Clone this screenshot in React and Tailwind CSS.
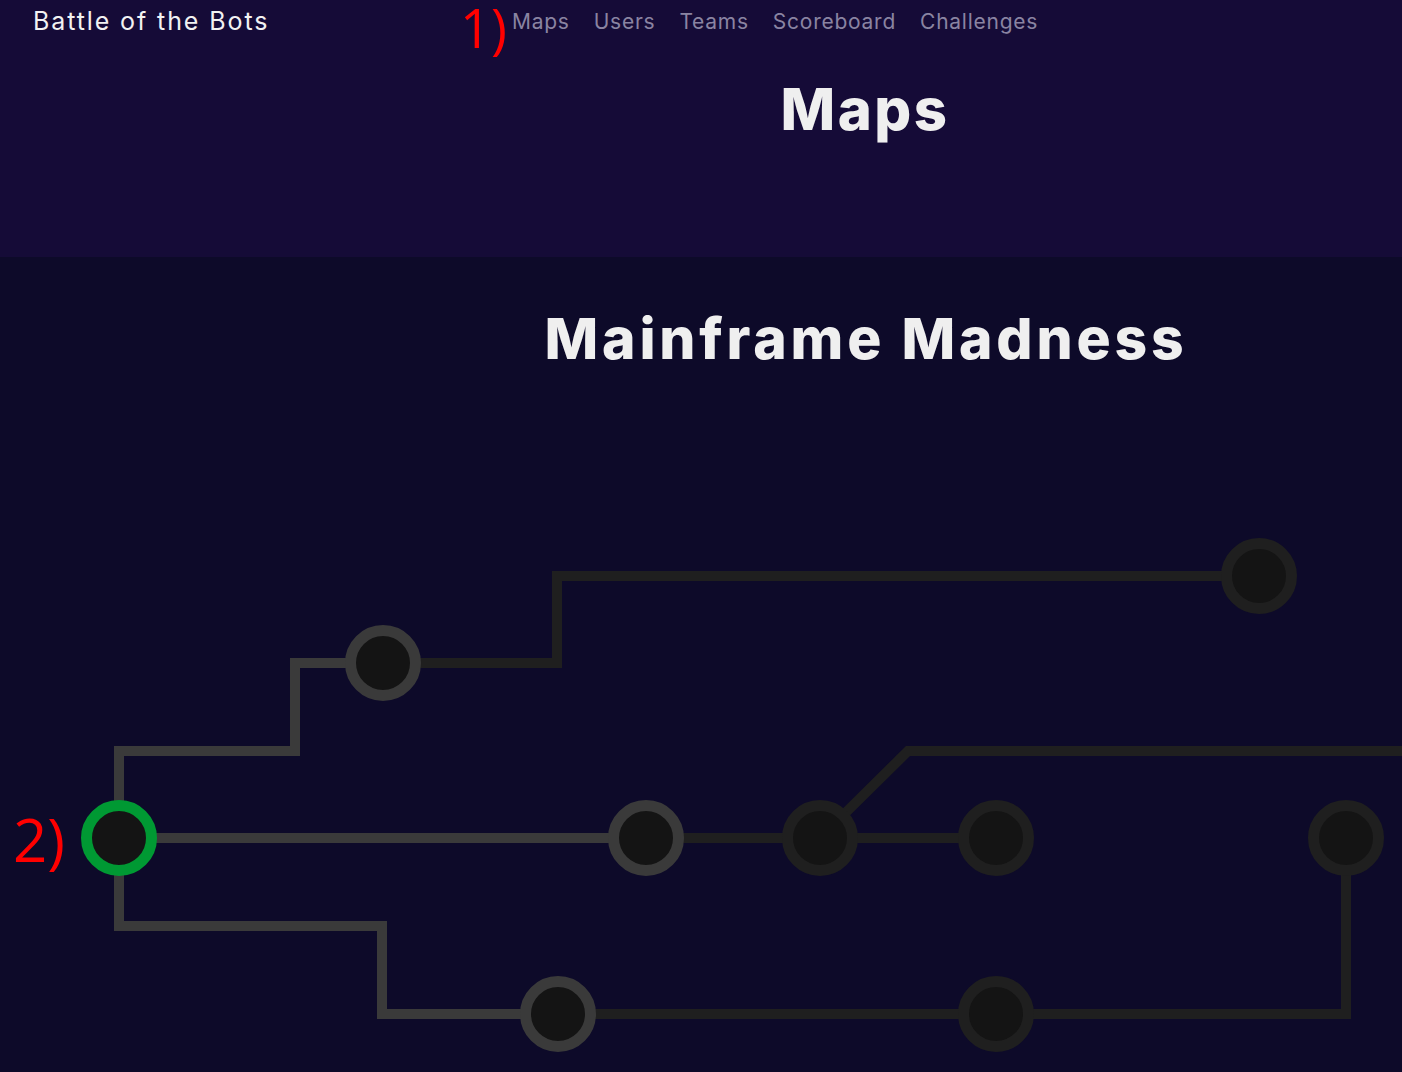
import React from "react";

const LIGHT = "#3a3a3a";
const DARK = "#1f1f1f";

function Circuit() {
  const nodes = [
    { x: 119, y: 838, ring: "#009933" },
    { x: 383, y: 663, ring: LIGHT },
    { x: 1259, y: 576, ring: DARK },
    { x: 646, y: 838, ring: LIGHT },
    { x: 820, y: 838, ring: DARK },
    { x: 996, y: 838, ring: DARK },
    { x: 1346, y: 838, ring: DARK },
    { x: 558, y: 1014, ring: LIGHT },
    { x: 996, y: 1014, ring: DARK },
  ];
  return (
    <svg
      width="1402"
      height="650"
      viewBox="0 422 1402 650"
      className="block"
      fill="none"
    >
      <g stroke={LIGHT} strokeWidth="10" strokeLinejoin="miter" strokeLinecap="butt">
        <polyline points="119,838 119,751 295,751 295,663 383,663" />
        <polyline points="119,838 646,838" />
        <polyline points="119,838 119,926 382,926 382,1014 558,1014" />
      </g>
      <g stroke={DARK} strokeWidth="10" strokeLinejoin="miter" strokeLinecap="butt">
        <polyline points="383,663 557,663 557,576 1259,576" />
        <polyline points="646,838 996,838" />
        <polyline points="820,838 908,751 1410,751" />
        <polyline points="558,1014 1346,1014 1346,838" />
      </g>
      {nodes.map((n, i) => (
        <circle
          key={i}
          cx={n.x}
          cy={n.y}
          r="32.5"
          fill="#141414"
          stroke={n.ring}
          strokeWidth="11"
        />
      ))}
    </svg>
  );
}

export default function App() {
  return (
    <div
      className="w-[1402px] h-[1072px] overflow-hidden bg-[#0d0a29]"
      style={{ fontFamily: "Inter, 'Liberation Sans', sans-serif" }}
    >
      <header className="relative h-[257px] bg-[#150b37]">
        <nav className="flex items-center h-[42px]">
          <div className="w-[512px] pl-[33px] text-[25px] text-[#f2f2f2] leading-none tracking-[1.9px]">
            Battle of the Bots
          </div>
          <ul className="flex items-center gap-[24px] text-[21px] text-[#8a84a2] leading-none tracking-[0.75px]">
            <li>Maps</li>
            <li>Users</li>
            <li>Teams</li>
            <li>Scoreboard</li>
            <li>Challenges</li>
          </ul>
        </nav>
        <div className="pl-[328px] pt-[38px] text-center">
          <h1 className="text-[58px] font-extrabold text-[#efefef] leading-none tracking-[2.5px]">
            Maps
          </h1>
        </div>
        <span
          className="absolute left-[460px] top-0 text-[54px] text-[#ff0000] leading-[54px]"
          style={{ fontFamily: "'Open Sans', sans-serif" }}
        >
          1)
        </span>
      </header>
      <main className="relative">
        <div className="h-[165px] pl-[330px] pt-[53px] text-center">
          <h2 className="text-[57px] font-extrabold text-[#efefef] leading-none tracking-[3.8px]">
            Mainframe Madness
          </h2>
        </div>
        <Circuit />
        <span
          className="absolute left-[13px] top-[552px] text-[60px] text-[#ff0000] leading-none"
          style={{ fontFamily: "'Open Sans', sans-serif" }}
        >
          2)
        </span>
      </main>
    </div>
  );
}
